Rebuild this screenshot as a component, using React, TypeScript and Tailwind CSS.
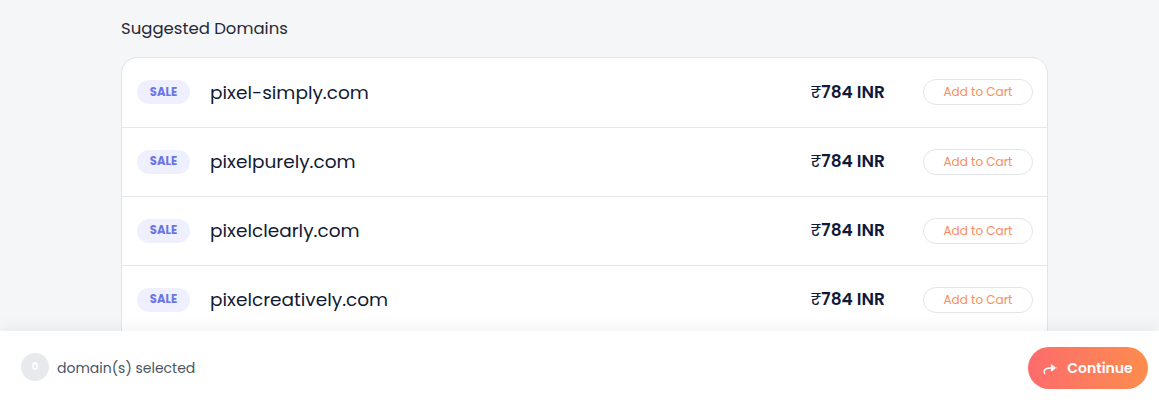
const domains = ["pixel-simply.com", "pixelpurely.com", "pixelclearly.com", "pixelcreatively.com"];

function ShareIcon() {
  return (
    <svg viewBox="0 0 512 512" className="h-[14px] w-[14px] fill-white">
      <path d="M503.7 226.2l-176 151.9C312.3 391.4 288 380.5 288 360V280C127.4 281.8 32 328.6 88.8 480.9c4.1 11-8.4 21-17.9 14.2C39.1 471.9 16 426.3 16 377.2 16 256.8 129.8 227.3 288 224V144c0-20.5 24.3-31.4 39.7-18.2l176 151.9c11.1 9.5 11.1 26.8 0 36.3z" />
    </svg>
  );
}

export default function App() {
  return (
    <div className="relative h-[402px] w-[1159px] overflow-hidden bg-[#f5f6f8]" style={{ fontFamily: "Poppins, 'Noto Sans', sans-serif" }}>
      <div className="ml-[121px] w-[927px] pt-[17px]">
        <h2 className="text-[16.5px] font-normal text-[#1f2937]">Suggested Domains</h2>
        <div className="mt-[15px] overflow-hidden rounded-[16px] border border-[#e2e4e9] bg-white">
          {domains.map((d, i) => (
            <div key={d} className={`flex h-[69px] items-center pl-[15px] pr-[14px] ${i > 0 ? "border-t border-[#e5e7eb]" : ""}`}>
              <span className="flex h-[24px] w-[53px] items-center justify-center rounded-full bg-[#eef0fe] text-[11.5px] font-bold text-[#6b74e8]">SALE</span>
              <span className="ml-[20px] pt-[1px] text-[18.5px] text-[#111a33]">{d}</span>
              <span className="ml-auto text-[17px] font-semibold text-[#0f1a3a]">
                <span className="font-normal">₹</span>784 INR
              </span>
              <button className="ml-[38px] h-[26px] w-[110px] rounded-full border border-[#e2e4e9] text-[12px] text-[#fb8c5c]">Add to Cart</button>
            </div>
          ))}
          <div className="h-[69px] border-t border-[#e5e7eb]" />
        </div>
      </div>
      <div className="absolute bottom-0 left-0 flex h-[71px] w-full items-center bg-white pl-[21px] pr-[11px] shadow-[0_-6px_12px_rgba(0,0,0,0.04)]">
        <span className="flex h-[28px] w-[28px] items-center justify-center rounded-full bg-[#e8e9ed] text-[10px] font-bold text-white">0</span>
        <span className="ml-[8px] pt-[3px] text-[14px] text-[#4b5563]">domain(s) selected</span>
        <button className="ml-auto mt-[3px] flex h-[42px] w-[120px] items-center justify-center gap-[10px] rounded-full bg-gradient-to-r from-[#fd6b6b] to-[#fd8c4c] text-[14px] font-semibold text-white">
          <ShareIcon />
          Continue
        </button>
      </div>
    </div>
  );
}
